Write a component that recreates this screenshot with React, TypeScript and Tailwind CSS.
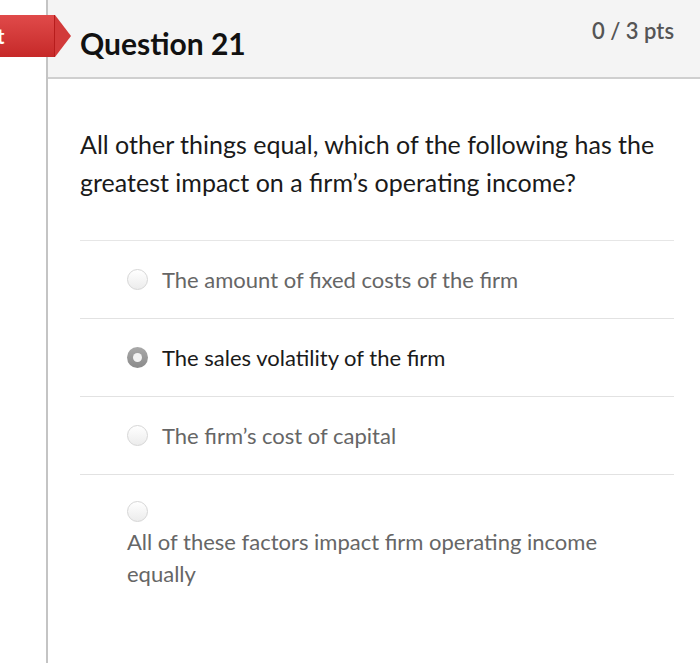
import React from 'react';

const Radio = ({ selected }: { selected?: boolean }) =>
  selected ? (
    <span className="flex w-[21px] h-[21px] shrink-0 rounded-full bg-gradient-to-b from-[#a9a9a9] to-[#8a8a8a] items-center justify-center">
      <span className="w-[9px] h-[9px] rounded-full bg-[#f2f2f2]" />
    </span>
  ) : (
    <span className="block w-[21px] h-[21px] shrink-0 rounded-full border border-[#d6d6d6] bg-gradient-to-b from-white to-[#ececec]" />
  );

const answers = [
  { text: 'The amount of fixed costs of the firm', selected: false },
  { text: 'The sales volatility of the firm', selected: true },
  { text: 'The firm\u2019s cost of capital', selected: false },
];

export default function App() {
  return (
    <div className="w-[700px] h-[663px] bg-white flex overflow-hidden" style={{ fontFamily: 'Lato, "Open Sans", sans-serif' }}>
      <div className="w-[46px] shrink-0 relative">
        <div className="absolute left-0 top-[15px] h-[42px] w-[71px] flex">
          <div className="w-[55px] h-full bg-gradient-to-b from-[#e04a4a] to-[#c62828] text-white font-bold text-[20px] flex items-center border-r border-[#b71c1c]">
            <span className="-ml-[3px]">t</span>
          </div>
          <div className="w-0 h-0 border-y-[21px] border-y-transparent border-l-[16px] border-l-[#d23a3a]" />
        </div>
      </div>
      <div className="w-[2px] shrink-0 bg-[#c4c4c4]" />
      <div className="flex-1 flex flex-col">
        <div className="h-[79px] bg-[#f4f4f4] border-b-2 border-[#cfcfcf] flex justify-between pl-[32px] pr-[26px]">
          <h2 className="text-[30px] font-bold text-[#111] mt-[24px] leading-[38px]">Question 21</h2>
          <span className="text-[22px] font-semibold text-[#555] mt-[16px] leading-[30px]">0 / 3 pts</span>
        </div>
        <div className="pl-[32px] pr-[26px]">
          <p className="text-[25px] leading-[38px] text-[#1a1a1a] mt-[46px]">
            All other things equal, which of the following has the greatest impact on a firm’s operating income?
          </p>
          <div className="mt-[39px] border-t border-[#e6e6e6]">
            {answers.map((a) => (
              <div key={a.text} className="h-[78px] border-b border-[#e2e2e2] flex items-center gap-[14px] pl-[47px]">
                <Radio selected={a.selected} />
                <span className={`text-[22px] ${a.selected ? 'text-[#1a1a1a]' : 'text-[#666]'}`}>{a.text}</span>
              </div>
            ))}
            <div className="pl-[47px] pt-[26px]">
              <Radio />
              <p className="text-[22px] leading-[32px] text-[#666] mt-[4px] w-[520px]">
                All of these factors impact firm operating income equally
              </p>
            </div>
          </div>
        </div>
      </div>
    </div>
  );
}
